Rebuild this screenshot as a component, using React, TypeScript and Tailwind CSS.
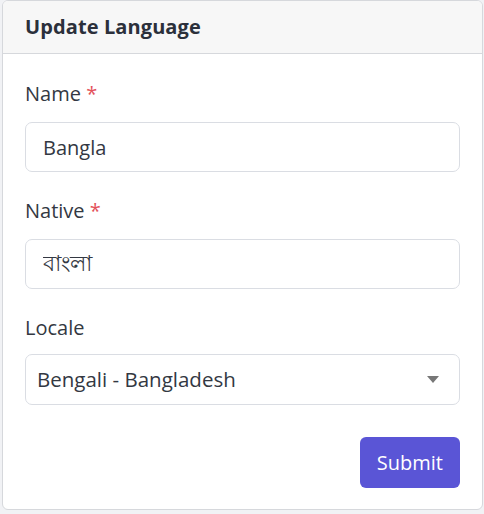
export default function App() {
  return (
    <div className="min-h-[514px] bg-[#f1f2f5] pl-[2px] pr-[1px] pb-[4px] font-['Open_Sans',sans-serif] text-[#333842]">
      <div className="overflow-hidden rounded-[6px] border border-[#d6d8dc] bg-white">
        <div className="flex h-[53px] items-center border-b border-[#d6d8dc] bg-[#f7f7f7] px-[22px]">
          <h1 className="text-[20px] font-bold tracking-[0.1px] text-[#2b303b]">Update Language</h1>
        </div>
        <form className="flex flex-col px-[22px] pt-[26px] pb-[21px]">
          <label className="text-[20px] leading-[28px]">
            Name <span className="text-[#e3525b]">*</span>
          </label>
          <input
            defaultValue="Bangla"
            className="mt-[14px] h-[50px] rounded-[7px] border border-[#dadde3] px-[17px] text-[20px] outline-none"
          />
          <label className="mt-[25px] text-[20px] leading-[28px]">
            Native <span className="text-[#e3525b]">*</span>
          </label>
          <input
            defaultValue="বাংলা"
            className="mt-[14px] h-[50px] rounded-[7px] border border-[#dadde3] px-[17px] text-[22px] outline-none"
          />
          <label className="mt-[25px] text-[20px] leading-[28px]">Locale</label>
          <div className="mt-[12px] flex h-[51px] items-center justify-between rounded-[7px] border border-[#dadde3] pl-[11px] pr-[20px]">
            <span className="text-[20.5px]">Bengali - Bangladesh</span>
            <svg width="12" height="7" viewBox="0 0 12 7" className="text-[#777]">
              <path d="M0 0h12L6 7z" fill="currentColor" />
            </svg>
          </div>
          <div className="mt-[32px] flex justify-end">
            <button
              type="button"
              className="h-[51px] rounded-[6px] bg-[#5a55d6] px-[17px] text-[20px] text-white"
            >
              Submit
            </button>
          </div>
        </form>
      </div>
    </div>
  );
}
